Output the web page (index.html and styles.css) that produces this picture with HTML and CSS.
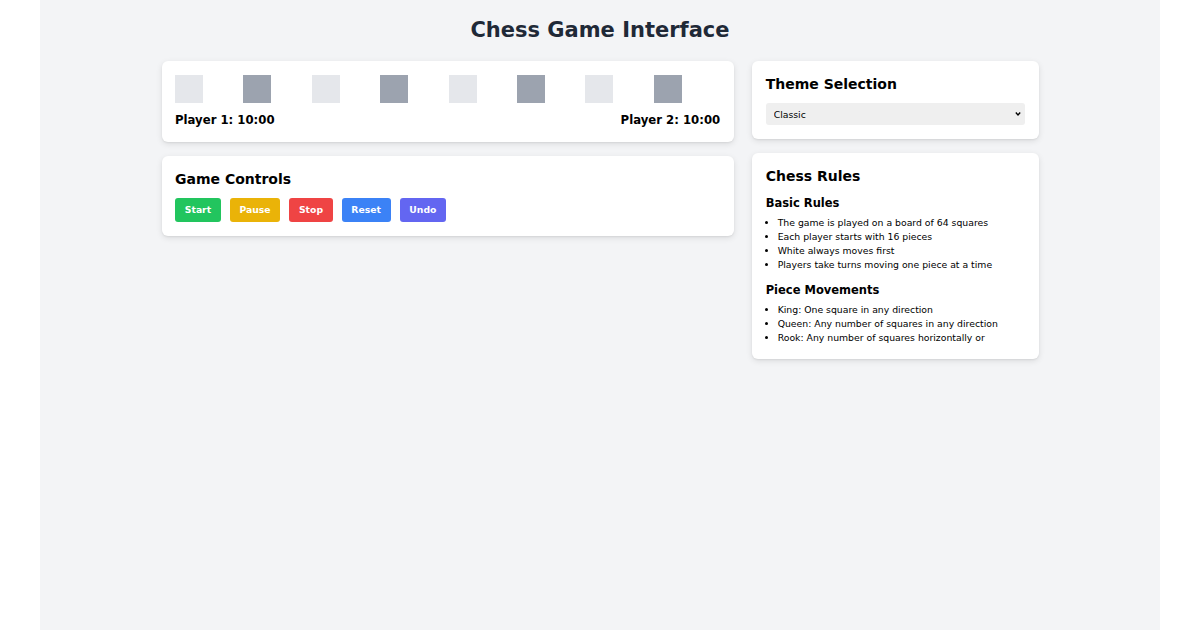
FILE: index.html
```html
<!DOCTYPE html>
<html>
<head>
    <title>Chess Game Interface</title>
    <link rel="stylesheet" href="styles.css">
</head>

<body>

<div class="page">
    <h1 class="title">Chess Game Interface</h1>

    <div class="layout">
        <div class="column">
            <div class="card">
                <div class="board">
                    <div class="square light"></div>
                    <div class="square dark"></div>
                    <div class="square light"></div>
                    <div class="square dark"></div>
                    <div class="square light"></div>
                    <div class="square dark"></div>
                    <div class="square light"></div>
                    <div class="square dark"></div>
                </div>
                <div class="timers">
                    <span>Player 1: 10:00</span>
                    <span>Player 2: 10:00</span>
                </div>
            </div>

            <div class="card">
                <h2>Game Controls</h2>
                <div class="controls">
                    <button class="btn start">Start</button>
                    <button class="btn pause">Pause</button>
                    <button class="btn stop">Stop</button>
                    <button class="btn reset">Reset</button>
                    <button class="btn undo">Undo</button>
                </div>
            </div>
        </div>

        <div class="column">
            <div class="card theme-card">
                <h2>Theme Selection</h2>
                <select class="theme">
                    <option>Classic</option>
                    <option>Wood</option>
                    <option>Marble</option>
                </select>
            </div>

            <div class="card">
                <h2>Chess Rules</h2>
                <h3>Basic Rules</h3>
                <ul>
                    <li>The game is played on a board of 64 squares</li>
                    <li>Each player starts with 16 pieces</li>
                    <li>White always moves first</li>
                    <li>Players take turns moving one piece at a time</li>
                </ul>
                <h3>Piece Movements</h3>
                <ul>
                    <li>King: One square in any direction</li>
                    <li>Queen: Any number of squares in any direction</li>
                    <li>Rook: Any number of squares horizontally or</li>
                </ul>
            </div>
        </div>
    </div>
</div>

</body>
</html>
```

FILE: styles.css
```css
body {
    margin: 0;
    background: #ffffff;
    font-family: 'DejaVu Sans', sans-serif;
    color: #000000;
}

.page {
    width: 1120px;
    min-height: 630px;
    margin: 0 auto;
    background: #f3f4f6;
    padding-top: 16px;
    box-sizing: border-box;
}

.title {
    margin: 0 0 17px 0;
    font-size: 21px;
    line-height: 28px;
    text-align: center;
    color: #1f2937;
}

.layout {
    width: 877px;
    margin: 0 auto;
    display: grid;
    grid-template-columns: minmax(0, 2fr) minmax(0, 1fr);
    column-gap: 18px;
    align-items: start;
}

.card {
    background: #ffffff;
    border-radius: 6px;
    padding: 14px 14px 14px 13.5px;
    margin-bottom: 14px;
    box-shadow: 0 2px 6px rgba(0,0,0,0.1), 0 1px 2px rgba(0,0,0,0.06);
}

h2 {
    margin: 0 0 10px 0;
    font-size: 14px;
    line-height: 18px;
}

h3 {
    margin: 10px 0 5px 0;
    font-size: 11.5px;
    line-height: 16px;
}

.board {
    display: grid;
    grid-template-columns: repeat(8, 68.4px);
}

.square {
    width: 28px;
    height: 28px;
}

.square.light {
    background: #e5e7eb;
}

.square.dark {
    background: #9ca3af;
}

.timers {
    display: flex;
    justify-content: space-between;
    margin-top: 9px;
    font-size: 11.7px;
    line-height: 16px;
    font-weight: bold;
}

.controls {
    display: flex;
    gap: 8.75px;
}

.btn {
    height: 23.5px;
    padding: 0 9.8px;
    border: none;
    border-radius: 3px;
    font-family: 'DejaVu Sans', sans-serif;
    font-size: 9.25px;
    font-weight: bold;
    color: #ffffff;
    cursor: pointer;
}

.btn.start { background: #22c55e; }
.btn.pause { background: #eab308; }
.btn.stop  { background: #ef4444; }
.btn.reset { background: #3b82f6; }
.btn.undo  { background: #6366f1; }

.theme {
    width: 100%;
    height: 22.5px;
    padding: 0 8px;
    border: none;
    border-radius: 3px;
    appearance: none;
    background-color: #efefef;
    background-image: url("data:image/svg+xml;utf8,<svg xmlns='http://www.w3.org/2000/svg' width='6' height='4' viewBox='0 0 6 4'><polyline points='0.8,0.6 3,2.9 5.2,0.6' fill='none' stroke='%23000' stroke-width='1.4'/></svg>");
    background-repeat: no-repeat;
    background-position: right 4px center;
    font-family: 'DejaVu Sans', sans-serif;
    font-size: 9.3px;
    color: #000000;
}

.theme-card h2 {
    margin-bottom: 9.5px;
}

ul {
    margin: 0;
    padding-left: 12px;
    font-size: 9.3px;
    line-height: 14px;
}
```
